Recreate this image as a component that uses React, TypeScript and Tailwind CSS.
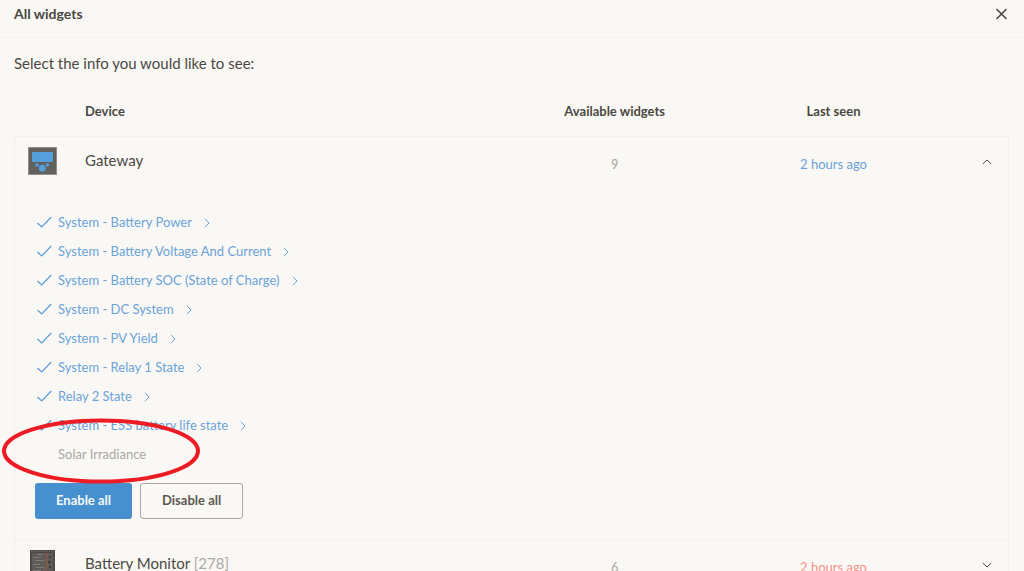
import { Fragment, useState } from "react";
import { cx } from "class-variance-authority";

// TYPES
type Widget = { name: string; enabled: boolean };

type Device = {
  id: string;
  name: string;
  instance?: string;
  count: number;
  lastSeen: string;
  online: boolean;
  icon: () => React.ReactElement;
  widgets: Widget[];
};

// ICONS
const GatewayIcon = () => (
  <svg width="29" height="28" viewBox="0 0 29 28" aria-hidden="true">
    <rect width="29" height="28" fill="#8f8e89" />
    <rect x="1" y="1" width="27" height="26" fill="#62615d" />
    <rect x="4" y="5" width="21" height="10" rx="1" fill="#559fdd" />
    <circle cx="9" cy="18" r="1.8" fill="#559fdd" />
    <circle cx="19.5" cy="18" r="1.8" fill="#559fdd" />
    <circle cx="14.3" cy="21.2" r="3.4" fill="#559fdd" />
  </svg>
);

const BatteryMonitorIcon = () => (
  <svg width="25" height="28" viewBox="0 0 25 28" aria-hidden="true">
    <rect width="25" height="28" fill="#4b4a47" />
    <path d="M1 1.5h23" stroke="#6b6a66" strokeDasharray="1 1" />
    <rect x="2" y="3" width="21" height="25" fill="#5d5b58" />
    <path
      d="M7 4.500h6M3 7.500h8M5 10.500h9M3 14.500h7M6 17.500h8M3 20.500h8"
      stroke="#7d7b77"
    />
    <path d="M14 4h3v8h-3M17 12v6h-3M16 18v8" fill="none" stroke="#96593f" />
    <path d="M18 12h3M19 7h2M19 17h2" stroke="#3d3c3a" strokeWidth="2" />
  </svg>
);

const CheckIcon = () => (
  <svg width="15" height="13" viewBox="0 0 15 13" fill="none" aria-hidden="true">
    <path d="M.5 7 4.700 11 14.300 1" stroke="#5b9bd9" strokeWidth="1.2" />
  </svg>
);

const ArrowIcon = ({ className }: { className?: string }) => (
  <svg
    width="10"
    height="10"
    viewBox="0 0 10 10"
    fill="none"
    stroke="currentColor"
    aria-hidden="true"
    className={className}
  >
    <path d="M3 .8 7 5 3 9.200" />
  </svg>
);

// DATA
const devices: Device[] = [
  {
    id: "gateway",
    name: "Gateway",
    count: 9,
    lastSeen: "2 hours ago",
    online: true,
    icon: GatewayIcon,
    widgets: [
      { name: "System - Battery Power", enabled: true },
      { name: "System - Battery Voltage And Current", enabled: true },
      { name: "System - Battery SOC (State of Charge)", enabled: true },
      { name: "System - DC System", enabled: true },
      { name: "System - PV Yield", enabled: true },
      { name: "System - Relay 1 State", enabled: true },
      { name: "Relay 2 State", enabled: true },
      { name: "System - ESS battery life state", enabled: true },
      { name: "Solar Irradiance", enabled: false },
    ],
  },
  {
    id: "battery-monitor",
    name: "Battery Monitor",
    instance: "[278]",
    count: 6,
    lastSeen: "2 hours ago",
    online: false,
    icon: BatteryMonitorIcon,
    widgets: [],
  },
];

// COMP
const WidgetList = ({ widgets }: { widgets: Widget[] }) => (
  <div className="relative pt-5 pb-5 pl-5">
    <ul>
      {widgets.map((widget) => (
        <li key={widget.name}>
          <a
            href="#"
            className={cx(
              "flex h-[29px] w-fit items-center text-[13px]",
              widget.enabled ? "text-[#6aa3da]" : "text-[#aaa8a3]",
            )}
          >
            <span className="w-[23px] pl-0.5">
              {widget.enabled && <CheckIcon />}
            </span>
            {widget.name}
            {widget.enabled && <ArrowIcon className="ml-2.5" />}
          </a>
        </li>
      ))}
    </ul>
    <div className="mt-3.5 flex gap-2 text-[13px] font-bold">
      <button className="h-9 rounded-[3px] bg-[#4790d0] px-[21px] text-[#f5f8fa]">
        Enable all
      </button>
      <button className="h-9 rounded-[3px] border border-[#aaa8a3] px-[21px] text-[#5a5852]">
        Disable all
      </button>
    </div>
    {/* Marker around the last widget */}
    <svg
      width="200"
      height="68"
      viewBox="0 0 200 68"
      fill="none"
      aria-hidden="true"
      className="pointer-events-none absolute bottom-[54px] -left-[15px]"
    >
      <ellipse cx="101" cy="34" rx="97" ry="30.5" stroke="#ed1c24" strokeWidth="4" />
    </svg>
  </div>
);

const App = () => {
  const [openId, setOpenId] = useState("gateway");

  return (
    <div className="h-screen overflow-hidden bg-[#faf8f4] font-['Museo_Sans','Lato',sans-serif] text-[#4a4843]">
      <header className="flex h-[38px] items-center justify-between border-b border-[#f4f2ee] pr-4 pb-2.5 pl-3.5">
        <h1 className="text-sm font-bold">All widgets</h1>
        <button aria-label="Close">
          <svg width="13" height="12" viewBox="0 0 13 12" aria-hidden="true">
            <path d="M1.500 1 11.500 11M11.500 1 1.500 11" stroke="#45433f" strokeWidth="1.5" />
          </svg>
        </button>
      </header>
      <main className="pt-[13px] pr-[15px] pl-3.5">
        <p className="text-[15px] leading-6">Select the info you would like to see:</p>
        <table className="mt-[13px] w-full table-fixed border-separate border-spacing-0">
          <colgroup>
            <col className="w-[71px]" />
            <col />
            <col className="w-[22%]" />
            <col className="w-[22%]" />
            <col className="w-[66px]" />
          </colgroup>
          <thead>
            <tr className="h-12 text-[13px] *:pb-0">
              <td />
              <th className="text-left font-bold">Device</th>
              <th className="font-bold">Available widgets</th>
              <th className="font-bold">Last seen</th>
              <td />
            </tr>
          </thead>
          <tbody>
            {devices.map((device) => {
              const isOpen = device.id === openId;
              return (
                <Fragment key={device.id}>
                  <tr className="h-[52px] text-center text-[13px] *:border-t *:border-[#f3f1ed]">
                    <td className="border-l pb-[3px]">
                      <div className="flex w-[54px] justify-center">
                        <device.icon />
                      </div>
                    </td>
                    <td className="pb-1 text-left text-[15px]">
                      {device.name}{" "}
                      {device.instance && (
                        <span className="text-[#aaa8a3]">{device.instance}</span>
                      )}
                    </td>
                    <td className="pt-1 text-[#aaa8a3]">{device.count}</td>
                    <td
                      className={cx(
                        "pt-1",
                        device.online ? "text-[#6aa3da]" : "text-[#f3918a]",
                      )}
                    >
                      {device.lastSeen}
                    </td>
                    <td className="border-r pr-4 pb-0.5 text-right">
                      <button
                        aria-label={`Toggle ${device.name}`}
                        aria-expanded={isOpen}
                        onClick={() => setOpenId(isOpen ? "" : device.id)}
                        className="align-middle"
                      >
                        <ArrowIcon className={isOpen ? "-rotate-90" : "rotate-90"} />
                      </button>
                    </td>
                  </tr>
                  {isOpen && (
                    <tr>
                      <td colSpan={5} className="border-x border-[#f3f1ed] p-0">
                        <WidgetList widgets={device.widgets} />
                      </td>
                    </tr>
                  )}
                </Fragment>
              );
            })}
          </tbody>
        </table>
      </main>
    </div>
  );
};
export default App;
